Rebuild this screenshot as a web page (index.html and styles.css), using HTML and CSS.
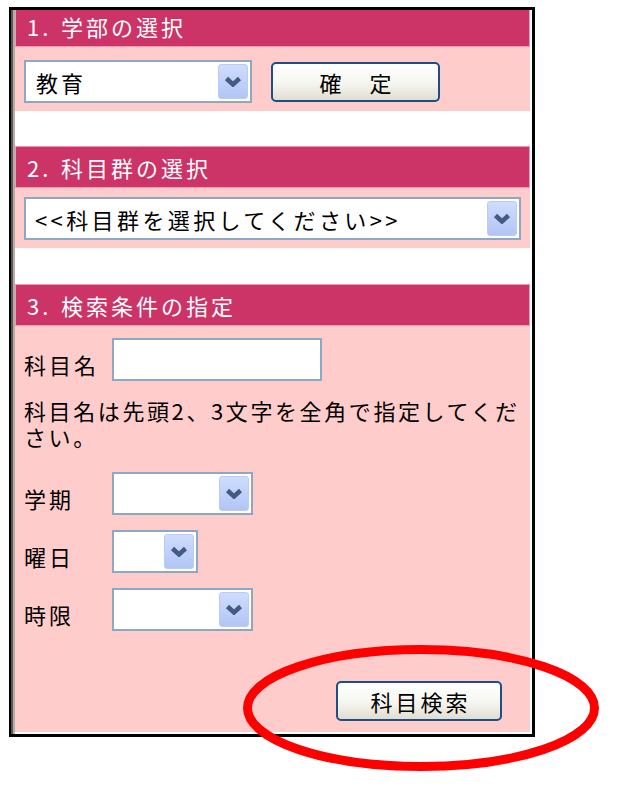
FILE: index.html
```html
<!DOCTYPE html>
<html lang="ja">

<head>
    <meta charset="UTF-8">
    <meta name="viewport" content="width=device-width, initial-scale=1.0">
    <title>科目検索</title>
    <link rel="stylesheet" href="styles.css">
</head>

<body>
    <div class="page">
        <div class="frame">
            <!-- 1. 学部 -->
            <div class="section section-faculty">
                <div class="section-head"><span class="head-num">1.</span>学部の選択</div>
                <div class="section-body row">
                    <div class="select select-faculty">
                        <span class="select-text">教育</span>
                        <span class="select-arrow"><svg width="18" height="11" viewBox="0 0 18 11"><polyline points="2.5,2.5 9,8.5 15.5,2.5" /></svg></span>
                    </div>
                    <button class="btn btn-confirm">確　定</button>
                </div>
            </div>

            <!-- 2. 科目群 -->
            <div class="section section-group">
                <div class="section-head"><span class="head-num">2.</span>科目群の選択</div>
                <div class="section-body">
                    <div class="select select-group">
                        <span class="select-text">&lt;&lt;科目群を選択してください&gt;&gt;</span>
                        <span class="select-arrow"><svg width="18" height="11" viewBox="0 0 18 11"><polyline points="2.5,2.5 9,8.5 15.5,2.5" /></svg></span>
                    </div>
                </div>
            </div>

            <!-- 3. 検索条件 -->
            <div class="section section-search">
                <div class="section-head"><span class="head-num">3.</span>検索条件の指定</div>
                <div class="section-body">
                    <div class="field">
                        <span class="field-label">科目名</span>
                        <div class="input"></div>
                    </div>
                    <p class="note"><span class="note-line">科目名は先頭2、3文字を全角で指定してくだ</span><span class="note-line">さい。</span></p>
                    <div class="field">
                        <span class="field-label">学期</span>
                        <div class="select select-term">
                            <span class="select-text"></span>
                            <span class="select-arrow"><svg width="18" height="11" viewBox="0 0 18 11"><polyline points="2.5,2.5 9,8.5 15.5,2.5" /></svg></span>
                        </div>
                    </div>
                    <div class="field">
                        <span class="field-label">曜日</span>
                        <div class="select select-day">
                            <span class="select-text"></span>
                            <span class="select-arrow"><svg width="18" height="11" viewBox="0 0 18 11"><polyline points="2.5,2.5 9,8.5 15.5,2.5" /></svg></span>
                        </div>
                    </div>
                    <div class="field field-last">
                        <span class="field-label">時限</span>
                        <div class="select select-term">
                            <span class="select-text"></span>
                            <span class="select-arrow"><svg width="18" height="11" viewBox="0 0 18 11"><polyline points="2.5,2.5 9,8.5 15.5,2.5" /></svg></span>
                        </div>
                    </div>
                    <div class="actions">
                        <button class="btn btn-search">科目検索</button>
                    </div>
                </div>
            </div>
        </div>

        <!-- 赤丸の注記 -->
        <svg class="mark" width="365" height="135" viewBox="0 0 365 135">
            <ellipse cx="181" cy="68" rx="173.5" ry="58.5" />
        </svg>
    </div>
</body>

</html>
```

FILE: styles.css
```css
body {
    margin: 0;
    background-color: #fff;
    font-family: "Noto Sans CJK JP", sans-serif;
    color: #000;
}

.page {
    position: relative;
    box-sizing: border-box;
    height: 793px;
    padding: 7px 0 0 9px;
}

.frame {
    width: 515px;
    padding: 0 2px 2px 4px;
    border: 3px solid #000;
    border-left-width: 2px;
    box-shadow: inset 2px 0 #5d5851, inset 4px 0 #b3aea6;
    overflow: hidden;
}

.section {
    background-color: #ffcccc;
}

.section-faculty {
    margin-top: -5px;
}

.section-group {
    margin-top: 35px;
}

.section-search {
    margin-top: 36px;
}

.section-head {
    height: 40px;
    padding-left: 8px;
    border: 1px solid #ee9ab2;
    background-color: #cc3366;
    color: #fff;
    font-size: 22px;
    line-height: 40px;
    letter-spacing: 3px;
}

.head-num {
    display: inline-block;
    width: 34px;
    padding-left: 3px;
}

.section-body {
    padding: 13px 9px 8px;
}

.section-group .section-body {
    padding-top: 9px;
}

.section-search .section-body {
    padding: 12px 9px 11px;
}

.row {
    display: flex;
    align-items: center;
}

.select,
.input {
    box-sizing: border-box;
    height: 43px;
    border: 2px solid #8ea7c6;
    background-color: #fff;
}

.select {
    display: flex;
    align-items: center;
    padding: 2px;
    flex: none;
}

.select-text {
    flex: 1;
    padding-left: 8px;
    font-size: 22px;
    letter-spacing: 3px;
    white-space: nowrap;
    overflow: hidden;
}

.select-arrow {
    display: flex;
    align-items: center;
    justify-content: center;
    box-sizing: border-box;
    width: 30px;
    height: 35px;
    border: 1px solid #b9ccf5;
    border-radius: 3px;
    background: linear-gradient(#cfdcfd, #b1c5f5);
}

.select-arrow polyline {
    fill: none;
    stroke: #435a82;
    stroke-width: 4.5;
}

.select-faculty {
    width: 228px;
}

.select-group {
    width: 497px;
}

.select-group .select-text {
    padding-left: 7px;
    letter-spacing: 3.4px;
}

.select-term {
    width: 141px;
}

.select-day {
    width: 86px;
}

.input {
    width: 210px;
}

.btn {
    box-sizing: border-box;
    height: 40px;
    padding: 0 0 0 3px;
    border: 2px solid #1f4e86;
    border-radius: 5px;
    background: linear-gradient(#fff 0%, #f5f5f0 55%, #e1ddd0 100%);
    color: #000;
    font-family: inherit;
    font-size: 22px;
    letter-spacing: 3px;
    cursor: pointer;
}

.btn-confirm {
    width: 169px;
    margin-left: 19px;
}

.btn-search {
    width: 166px;
}

.field {
    display: flex;
    align-items: center;
}

.field+.field {
    margin-top: 15px;
}

.field-last {
    margin-top: 16px;
}

.field-label {
    width: 88px;
    flex: none;
    padding-top: 8px;
    font-size: 22px;
    letter-spacing: 3px;
}

.note {
    margin: 16px 0 23px;
    font-size: 22px;
    letter-spacing: 2.6px;
    white-space: nowrap;
}

.note-line {
    display: block;
    height: 26px;
    line-height: 26px;
}

.actions {
    display: flex;
    justify-content: flex-end;
    margin-top: 50px;
    padding-right: 19px;
}

.mark {
    position: absolute;
    left: 240px;
    top: 640px;
    pointer-events: none;
}

.mark ellipse {
    fill: none;
    stroke: #ff0000;
    stroke-width: 9;
}
```
